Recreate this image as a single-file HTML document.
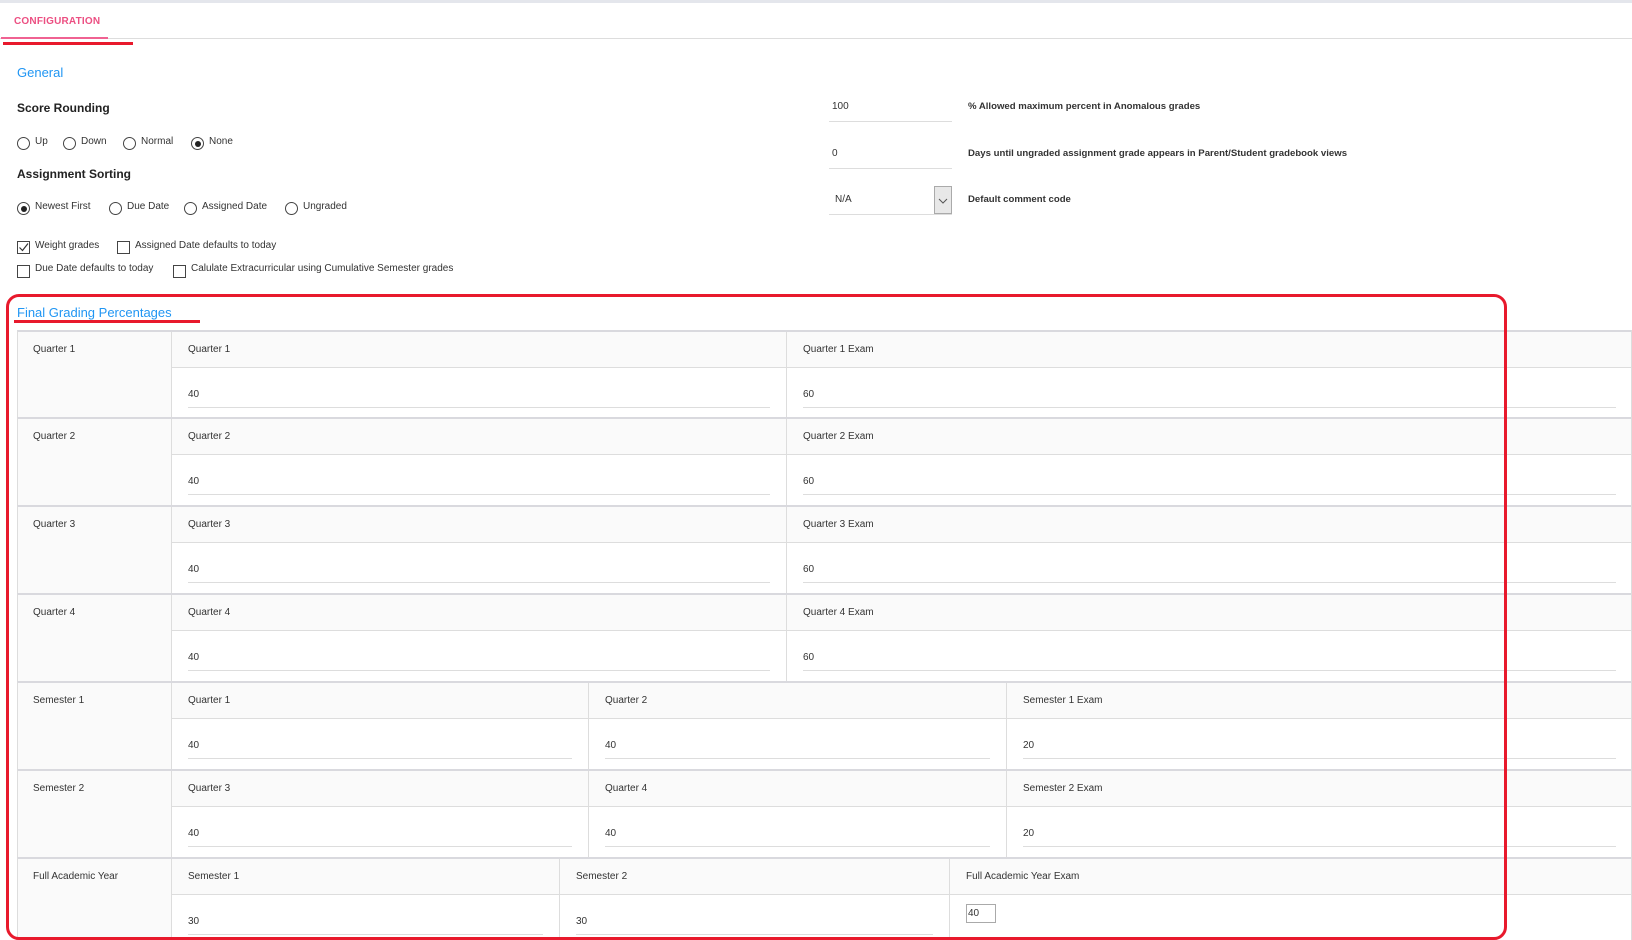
<!DOCTYPE html>
<html><head><meta charset="utf-8"><style>
*{box-sizing:border-box;margin:0;padding:0}
body{width:1632px;height:940px;position:relative;overflow:hidden;background:#fff;font-family:"Liberation Sans",Arial,sans-serif;color:#333}
.a{position:absolute;white-space:nowrap}
.s{font-size:10px;color:#333}
.b{font-weight:bold}
.rad{position:absolute;width:13px;height:13px;border:1px solid #444;border-radius:50%}
.rad.on::after{content:"";position:absolute;left:2.5px;top:2.5px;width:6px;height:6px;border-radius:50%;background:#222}
.cb{position:absolute;width:13px;height:13px;border:1px solid #444}
.row{position:absolute;left:17px;right:0;border-top:2px solid #d9d9de;border-left:1px solid #ddd}
.lab{position:absolute;left:0;top:0;bottom:0;width:154px;background:#fafafa;border-right:1px solid #ddd;font-size:10px;padding:12px 0 0 15px}
.col{position:absolute;top:0;bottom:0;border-right:1px solid #ddd}
.hd{height:36px;background:#fafafa;border-bottom:1px solid #ddd;font-size:10px;padding:12px 0 0 16px}
.vl{position:absolute;left:16px;right:16px;top:57px;height:19px;border-bottom:1px solid #ddd;font-size:10px}
</style></head><body>
<div class="a" style="left:0;top:0;width:1632px;height:3px;background:#e4e6ec"></div>
<div class="a" style="left:0;top:38px;width:1632px;height:1px;background:#ddd"></div>
<div class="a" style="left:1px;top:37px;width:107px;height:2px;background:#f06292"></div>
<div class="a b" style="left:14px;top:16px;font-size:10px;color:#ec4f82;letter-spacing:.2px">CONFIGURATION</div>
<div class="a" style="left:3px;top:42px;width:130px;height:3px;background:#e8192c"></div>

<div class="a" style="left:17px;top:65px;font-size:13px;color:#2196f3">General</div>
<div class="a b" style="left:17px;top:101px;font-size:12px;color:#222">Score Rounding</div>
<div class="rad" style="left:17px;top:137px"></div><div class="a s" style="left:35px;top:136px">Up</div>
<div class="rad" style="left:63px;top:137px"></div><div class="a s" style="left:81px;top:136px">Down</div>
<div class="rad" style="left:123px;top:137px"></div><div class="a s" style="left:141px;top:136px">Normal</div>
<div class="rad on" style="left:191px;top:137px"></div><div class="a s" style="left:209px;top:136px">None</div>
<div class="a b" style="left:17px;top:167px;font-size:12px;color:#222">Assignment Sorting</div>
<div class="rad on" style="left:17px;top:202px"></div><div class="a s" style="left:35px;top:201px">Newest First</div>
<div class="rad" style="left:109px;top:202px"></div><div class="a s" style="left:127px;top:201px">Due Date</div>
<div class="rad" style="left:184px;top:202px"></div><div class="a s" style="left:202px;top:201px">Assigned Date</div>
<div class="rad" style="left:285px;top:202px"></div><div class="a s" style="left:303px;top:201px">Ungraded</div>
<div class="cb" style="left:17px;top:241px"><svg width="11" height="11" style="position:absolute;left:0;top:0"><path d="M1.5 5.5L4.5 8.5L10 1.5" stroke="#333" stroke-width="1.2" fill="none"/></svg></div><div class="a s" style="left:35px;top:240px">Weight grades</div>
<div class="cb" style="left:117px;top:241px"></div><div class="a s" style="left:135px;top:240px">Assigned Date defaults to today</div>
<div class="cb" style="left:17px;top:265px"></div><div class="a s" style="left:35px;top:263px">Due Date defaults to today</div>
<div class="cb" style="left:173px;top:265px"></div><div class="a s" style="left:191px;top:263px">Calulate Extracurricular using Cumulative Semester grades</div>

<div class="a s" style="left:832px;top:101px">100</div>
<div class="a" style="left:829px;top:121px;width:123px;height:1px;background:#ddd"></div>
<div class="a s b" style="left:968px;top:101px;font-size:9.6px">% Allowed maximum percent in Anomalous grades</div>
<div class="a s" style="left:832px;top:148px">0</div>
<div class="a" style="left:829px;top:168px;width:123px;height:1px;background:#ddd"></div>
<div class="a s b" style="left:968px;top:148px;font-size:9.6px">Days until ungraded assignment grade appears in Parent/Student gradebook views</div>
<div class="a s" style="left:835px;top:194px">N/A</div>
<div class="a" style="left:934px;top:186px;width:18px;height:28px;background:#e8e8e8;border:1px solid #aaa"><svg width="16" height="26"><path d="M4 12l4 4 4-4" stroke="#555" fill="none"/></svg></div>
<div class="a" style="left:829px;top:214px;width:123px;height:1px;background:#ddd"></div>
<div class="a s b" style="left:968px;top:194px;font-size:9.6px">Default comment code</div>

<div class="row" style="top:330px;height:88px"><div class="lab">Quarter 1</div>
<div class="col" style="left:154px;width:615px"><div class="hd">Quarter 1</div><div class="vl">40</div></div>
<div class="col" style="left:769px;right:0;border-right:0"><div class="hd">Quarter 1 Exam</div><div class="vl">60</div></div></div>
<div class="row" style="top:417px;height:88px"><div class="lab">Quarter 2</div>
<div class="col" style="left:154px;width:615px"><div class="hd">Quarter 2</div><div class="vl">40</div></div>
<div class="col" style="left:769px;right:0;border-right:0"><div class="hd">Quarter 2 Exam</div><div class="vl">60</div></div></div>
<div class="row" style="top:505px;height:88px"><div class="lab">Quarter 3</div>
<div class="col" style="left:154px;width:615px"><div class="hd">Quarter 3</div><div class="vl">40</div></div>
<div class="col" style="left:769px;right:0;border-right:0"><div class="hd">Quarter 3 Exam</div><div class="vl">60</div></div></div>
<div class="row" style="top:593px;height:88px"><div class="lab">Quarter 4</div>
<div class="col" style="left:154px;width:615px"><div class="hd">Quarter 4</div><div class="vl">40</div></div>
<div class="col" style="left:769px;right:0;border-right:0"><div class="hd">Quarter 4 Exam</div><div class="vl">60</div></div></div>
<div class="row" style="top:681px;height:88px"><div class="lab">Semester 1</div>
<div class="col" style="left:154px;width:417px"><div class="hd">Quarter 1</div><div class="vl">40</div></div>
<div class="col" style="left:571px;width:418px"><div class="hd">Quarter 2</div><div class="vl">40</div></div>
<div class="col" style="left:989px;right:0;border-right:0"><div class="hd">Semester 1 Exam</div><div class="vl">20</div></div></div>
<div class="row" style="top:769px;height:88px"><div class="lab">Semester 2</div>
<div class="col" style="left:154px;width:417px"><div class="hd">Quarter 3</div><div class="vl">40</div></div>
<div class="col" style="left:571px;width:418px"><div class="hd">Quarter 4</div><div class="vl">40</div></div>
<div class="col" style="left:989px;right:0;border-right:0"><div class="hd">Semester 2 Exam</div><div class="vl">20</div></div></div>
<div class="row" style="top:857px;height:83px"><div class="lab">Full Academic Year</div>
<div class="col" style="left:154px;width:388px"><div class="hd">Semester 1</div><div class="vl">30</div></div>
<div class="col" style="left:542px;width:390px"><div class="hd">Semester 2</div><div class="vl">30</div></div>
<div class="col" style="left:932px;right:0;border-right:0"><div class="hd">Full Academic Year Exam</div>
<div class="a" style="left:16px;top:45px;width:30px;height:19px;border:1px solid #aaa;font-size:10px;padding:3px 1px">40</div></div></div>
<div class="a" style="right:0;top:330px;width:1px;height:610px;background:#ddd"></div>

<div class="a" style="left:6px;top:294px;width:1501px;height:646px;border:3px solid #e8192c;border-radius:13px"></div>
<div class="a" style="left:17px;top:305px;font-size:13px;color:#2196f3">Final Grading Percentages</div>
<div class="a" style="left:14px;top:320px;width:186px;height:3px;background:#e8192c"></div>
</body></html>
